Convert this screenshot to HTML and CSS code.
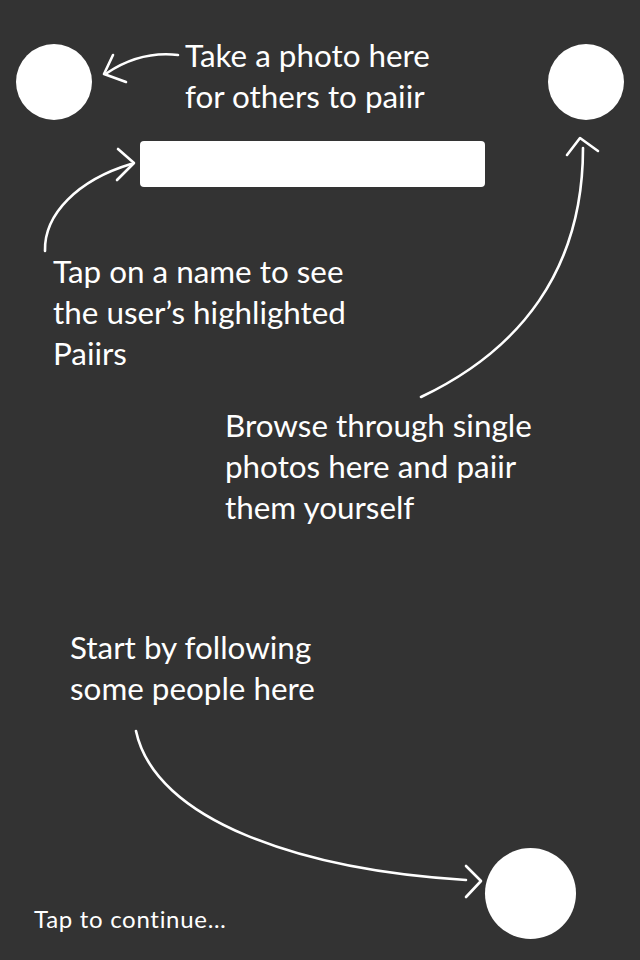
FILE: index.html
```html
<!DOCTYPE html>
<html lang="en">
<head>
<meta charset="utf-8">
<title>Paiir tutorial</title>
<link rel="stylesheet" href="styles.css">
</head>
<body>
<main class="overlay">
  <div class="spot spot-camera"></div>
  <div class="spot spot-browse"></div>
  <div class="spot spot-people"></div>
  <div class="searchbar"></div>

  <p class="tip tip-photo">Take a photo here<br>for others to paiir</p>
  <p class="tip tip-name">Tap on a name to see<br>the user’s highlighted<br>Paiirs</p>
  <p class="tip tip-browse">Browse through single<br>photos here and paiir<br>them yourself</p>
  <p class="tip tip-follow">Start by following<br>some people here</p>
  <p class="continue">Tap to continue…</p>

  <svg class="arrows" width="640" height="960" viewBox="0 0 640 960" aria-hidden="true">
    <g fill="none" stroke="#fff" stroke-width="2.6" stroke-linecap="round" stroke-linejoin="round">
      <path d="M178,55 C152,52 128,59 107,73"/>
      <polyline points="113,55 104,74 126,82"/>

      <path d="M45,251 C44,214 78,180 131,164"/>
      <polyline points="118,149 134,163 117,180"/>

      <path d="M421,397 C520,350 583,270 583,148"/>
      <polyline points="567,155 580,138 598,151"/>

      <path d="M136,731 C155,820 300,870 466,880"/>
      <polyline points="466,866 481,881 466,897"/>
    </g>
  </svg>
</main>
</body>
</html>
```
FILE: styles.css
```css
html, body {
  margin: 0;
  padding: 0;
  background: #333333;
}

.overlay {
  position: relative;
  width: 640px;
  height: 960px;
  overflow: hidden;
  background: #333333;
  color: #ffffff;
  font-family: "Lato", "Open Sans", sans-serif;
}

.spot {
  position: absolute;
  border-radius: 50%;
  background: #ffffff;
}

.spot-camera {
  left: 16px;
  top: 44px;
  width: 76px;
  height: 76px;
}

.spot-browse {
  left: 548px;
  top: 44px;
  width: 76px;
  height: 76px;
}

.spot-people {
  left: 485px;
  top: 848px;
  width: 91px;
  height: 91px;
}

.searchbar {
  position: absolute;
  left: 140px;
  top: 141px;
  width: 345px;
  height: 46px;
  border-radius: 4px;
  background: #ffffff;
}

.tip {
  position: absolute;
  margin: 0;
  font-size: 31.4px;
  line-height: 41px;
  white-space: nowrap;
}

.tip-photo {
  left: 185px;
  top: 35px;
}

.tip-name {
  left: 53px;
  top: 251px;
}

.tip-browse {
  left: 225px;
  top: 405px;
}

.tip-follow {
  left: 70px;
  top: 627px;
}

.continue {
  position: absolute;
  margin: 0;
  left: 34px;
  top: 904px;
  font-size: 24px;
  line-height: 30px;
  letter-spacing: 0.7px;
  white-space: nowrap;
}

.arrows {
  position: absolute;
  left: 0;
  top: 0;
  pointer-events: none;
}
```
